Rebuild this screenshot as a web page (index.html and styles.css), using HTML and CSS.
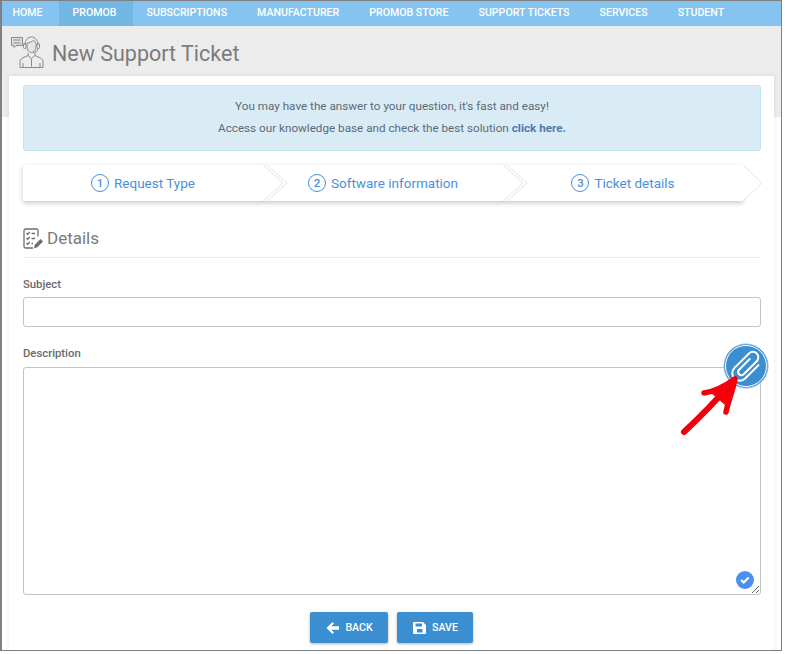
FILE: index.html
```html
<!DOCTYPE html>
<html lang="en">
<head>
<meta charset="utf-8">
<title>New Support Ticket</title>
<link rel="stylesheet" href="styles.css">
</head>
<body>
<div class="frame">
  <nav class="nav">
    <a class="nav-item">HOME</a>
    <a class="nav-item active">PROMOB</a>
    <a class="nav-item">SUBSCRIPTIONS</a>
    <a class="nav-item">MANUFACTURER</a>
    <a class="nav-item">PROMOB STORE</a>
    <a class="nav-item">SUPPORT TICKETS</a>
    <a class="nav-item">SERVICES</a>
    <a class="nav-item">STUDENT</a>
  </nav>
  <header class="page-head">
    <svg class="head-icon" width="34" height="34" viewBox="0 0 34 34" fill="none" stroke="#8a8a8a" stroke-width="1">
      <path d="M1.500 2.500h11v8H6l-2 2v-2H1.500z" fill="#dedede"/>
      <path d="M3.500 5h7M3.500 8h7"/>
      <g transform="translate(-1 -3)">
        <path d="M16 13c0-5 3-8 6.500-8s6.500 3 6.500 8"/>
        <path d="M18 11c2 0 5-1 6.500-3 1 1.500 2 2.500 2.500 3.500v3c0 4-2.500 6-4.500 6s-4.500-2-4.500-6z" fill="#e4e4e4"/>
        <rect x="14.500" y="11.500" width="2.500" height="5" rx="1"/>
        <rect x="28" y="11.500" width="2.500" height="5" rx="1"/>
        <path d="M29 16.500c0 3-2.500 4-5 4"/>
      </g>
      <path d="M18 18v2.500l-5.500 2.500c-2 1-2.500 2.500-2.500 4v5.500h23V27c0-1.500-.5-3-2.500-4L25 20.500V18"/>
      <path d="M18 20.500l3.500 3 3.500-3M21.500 23.500v8M13 28v4.500M30 28v4.500"/>
    </svg>
    <h1 class="page-title">New Support Ticket</h1>
  </header>
  <main class="card">
    <div class="alert">
      <p class="alert-line">You may have the answer to your question, it's fast and easy!</p>
      <p class="alert-line">Access our knowledge base and check the best solution <a class="alert-link">click here.</a></p>
    </div>
    <div class="steps">
      <div class="step"><span class="step-num">1</span>Request Type
        <svg class="chev" width="24" height="36" viewBox="0 0 24 36" fill="#fff" stroke="#e4e4e4"><path d="M0 0l20 18-20 18z" stroke="none"/><path d="M0 0l20 18L0 36M4 0l20 18L4 36" fill="none"/></svg>
      </div>
      <div class="step"><span class="step-num">2</span>Software information
        <svg class="chev" width="24" height="36" viewBox="0 0 24 36" fill="#fff" stroke="#e4e4e4"><path d="M0 0l20 18-20 18z" stroke="none"/><path d="M0 0l20 18L0 36M4 0l20 18L4 36" fill="none"/></svg>
      </div>
      <div class="step"><span class="step-num">3</span>Ticket details
        <svg class="chev chev-last" width="20" height="36" viewBox="0 0 20 36" fill="#fff" stroke="#e4e4e4"><path d="M0 0l19 18L0 36z" stroke="none"/><path d="M0 0l19 18L0 36" fill="none"/></svg>
      </div>
    </div>
    <h2 class="section">
      <svg width="20" height="21" viewBox="0 0 20 21" fill="none" stroke="#6e6e6e" stroke-width="1.300">
        <path d="M15 8.500V2.500A1.500 1.500 0 0 0 13.500 1H2.500A1.500 1.500 0 0 0 1 2.500v16A1.500 1.500 0 0 0 2.500 20H10"/>
        <path d="M3.500 5l1.200 1.200L6.800 4M3.500 10l1.200 1.200 2.100-2.200M3.500 15l1.200 1.200 2.100-2.200M8.500 5.500H12M8.500 10.500H12M8.500 15.500H10"/>
        <path d="M11 20.500l.8-3.800 5.700-5.700 2.500 2.500-5.700 5.700z" fill="#6e6e6e" stroke="none"/>
      </svg>
      <span>Details</span>
    </h2>
    <label class="label" for="subject">Subject</label>
    <input class="field" id="subject" type="text">
    <label class="label" for="description">Description</label>
    <div class="area-wrap">
      <textarea class="area" id="description"></textarea>
      <span class="check">
        <svg width="10" height="8" viewBox="0 0 10 8" fill="none" stroke="#fff" stroke-width="2"><path d="M1.200 4l2.500 2.500 5-5"/></svg>
      </span>
      <svg class="clip" width="46" height="46" viewBox="0 0 46 46">
        <circle cx="23" cy="23" r="22" fill="#3b8fd0" stroke="#7fb6e2" stroke-width="1"/>
        <circle cx="23" cy="23" r="20.500" fill="none" stroke="#fff" stroke-width="1"/>
        <path d="M31 14V33a7.500 7.500 0 0 1-15 0V12.500a5.500 5.500 0 0 1 11 0V31a3.250 3.250 0 0 1-6.500 0V16" transform="rotate(45 23.500 23.500)" fill="none" stroke="#fff" stroke-width="2" stroke-linecap="round"/>
      </svg>
      <svg class="arrow" width="66" height="68" viewBox="0 0 66 68" fill="none" stroke="#f5000a" stroke-width="6" stroke-linecap="round" stroke-linejoin="round">
        <path d="M5 60 C20 46 36 30 55 8"/>
        <path d="M25 21 C34 20 46 14 56 7 C54 18 49 30 47 40" stroke-width="5.500"/>
        <path d="M33 21 L55 8 L46 32z" fill="#f5000a" stroke-width="1"/>
      </svg>
    </div>
    <div class="actions">
      <button class="btn btn-back" type="button">
        <svg width="13" height="12" viewBox="0 0 13 12" fill="#fff"><path d="M6.500 0l1.500 1.500L5.200 4.300H13v3.400H5.200L8 10.500 6.500 12 .5 6z"/></svg>
        BACK
      </button>
      <button class="btn btn-save" type="button">
        <svg width="13" height="12" viewBox="0 0 13 12" fill="#fff"><path fill-rule="evenodd" d="M1 0h9l3 3v8a1 1 0 0 1-1 1H1a1 1 0 0 1-1-1V1a1 1 0 0 1 1-1zm1.500 1.500v3h6.500v-3zM4 7v3.500h5.500V7z"/></svg>
        SAVE
      </button>
    </div>
  </main>
</div>
</body>
</html>
```
FILE: styles.css
```css
* { box-sizing: border-box; }
html, body { margin: 0; padding: 0; background: #fff; }
body { font-family: Roboto, "Liberation Sans", sans-serif; }
.frame {
  width: 782px;
  height: 651px;
  border: 1px solid #808080;
  border-left-width: 2px;
  overflow: hidden;
  background: linear-gradient(#ececec 116px, #fff 116px);
}
.nav { display: flex; height: 25px; background: #85c4f0; }
.nav-item {
  display: flex;
  align-items: center;
  height: 25px;
  padding: 0 16.500px 2px 13.500px;
  color: #fff;
  font-size: 10.600px;
  font-weight: 500;
}
.nav-item:first-child { padding-left: 10.500px; }
.active { background: #72b6e4; }
.page-head { display: flex; align-items: flex-start; height: 50px; padding: 9px 0 0 8px; }
.head-icon { flex: none; }
.page-title {
  margin: 6px 0 0 8px;
  font-size: 21.500px;
  line-height: 26px;
  font-weight: 400;
  color: #7b7b7b;
}
.card {
  margin: 0 7px;
  height: 580px;
  padding: 9px 13px 0 14px;
  background: #fff;
  box-shadow: 0 0 4px rgba(0,0,0,.1);
}
.alert {
  height: 66px;
  padding: 9px 0 0;
  background: #d9ecf6;
  border: 1px solid #bde5ee;
  border-radius: 3px;
  text-align: center;
  font-size: 11.700px;
  color: #5b6a78;
}
.alert-line { margin: 0; line-height: 22px; }
.alert-link { font-weight: 700; color: #4f78b0; }
.steps {
  display: flex;
  width: 720px;
  height: 36px;
  margin-top: 14px;
  background: #fff;
  box-shadow: 0 2px 5px rgba(0,0,0,.22);
}
.step {
  position: relative;
  flex: 0 0 240px;
  display: flex;
  align-items: center;
  justify-content: center;
  gap: 5px;
  font-size: 13.500px;
  color: #4a90d9;
}
.step-num {
  display: flex;
  align-items: center;
  justify-content: center;
  width: 18px;
  height: 18px;
  border: 1.500px solid #4a90d9;
  border-radius: 50%;
  font-size: 11.500px;
  font-weight: 500;
  color: #4a90d9;
}
.chev { position: absolute; left: 100%; top: 0; z-index: 1; }
.section {
  display: flex;
  align-items: center;
  gap: 4px;
  height: 39px;
  margin: 18px 0 0;
  border-bottom: 1px solid #ececec;
  font-size: 17px;
  line-height: 20px;
  font-weight: 400;
  color: #7b7b7b;
}
.label {
  display: block;
  margin-top: 21px;
  height: 12px;
  line-height: 12px;
  font-size: 11.300px;
  font-weight: 500;
  color: #6a6a6a;
}
.field {
  display: block;
  width: 738px;
  height: 30px;
  margin-top: 6px;
  border: 1px solid #c4c4c4;
  border-radius: 3px;
  background: #fff;
  outline: none;
}
.area-wrap { position: relative; width: 738px; height: 228px; margin-top: 7px; }
.area {
  display: block;
  width: 738px;
  height: 228px;
  border: 1px solid #c4c4c4;
  border-radius: 3px;
  background: #fff;
  outline: none;
  resize: both;
}
.check {
  position: absolute;
  right: 7px;
  bottom: 6px;
  display: flex;
  align-items: center;
  justify-content: center;
  width: 18px;
  height: 18px;
  border-radius: 50%;
  background: #4a90f0;
}
.clip { position: absolute; right: -8px; top: -24px; }
.arrow { position: absolute; left: 656px; top: 5px; }
.actions { display: flex; justify-content: center; gap: 9px; margin-top: 17px; padding-right: 2px; }
.btn {
  display: flex;
  align-items: center;
  justify-content: center;
  gap: 6px;
  height: 31px;
  padding: 0 0 0 2px;
  border: 0;
  border-radius: 2px;
  background: #3b8fd0;
  box-shadow: 0 1px 3px rgba(0,0,0,.3);
  color: #fff;
  font-family: Roboto, "Liberation Sans", sans-serif;
  font-size: 10.600px;
  font-weight: 500;
}
.btn-back { width: 78px; }
.btn-save { width: 76px; }
```
